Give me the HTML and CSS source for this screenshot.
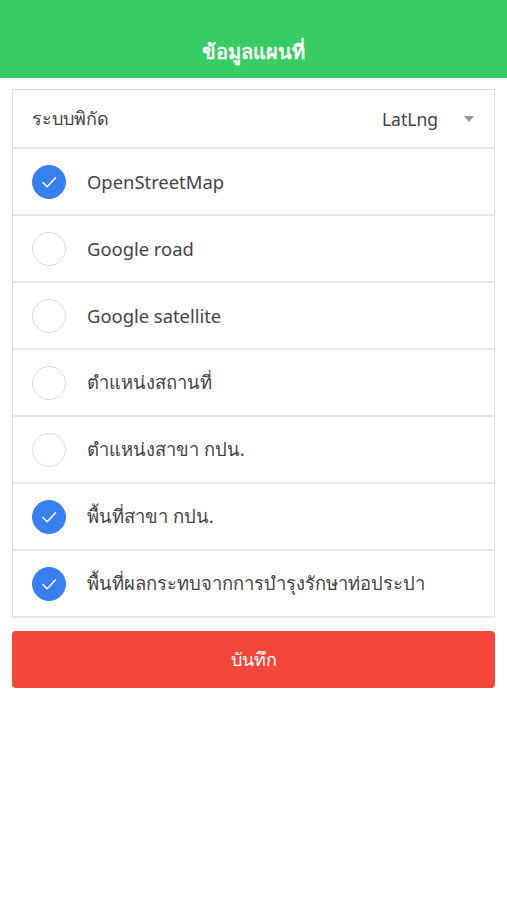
FILE: index.html
```html
<!DOCTYPE html>
<html>

<head>
    <title>ข้อมูลแผนที่</title>
    <meta charset="utf-8">
    <meta name="viewport" content="width=device-width, initial-scale=1">
    <link rel="stylesheet" href="styles.css">
</head>

<body>
    <div class="header">
        <div class="title">ข้อมูลแผนที่</div>
    </div>

    <div class="content">
        <div class="list">
            <div class="row select_row">
                <div class="label">ระบบพิกัด</div>
                <div class="value">LatLng</div>
                <div class="arrow"></div>
            </div>
            <div class="row">
                <div class="check checked"><svg viewBox="0 0 34 34"><path d="M10.5 17.5 L15 22 L24 12.5" /></svg></div>
                <div class="text">OpenStreetMap</div>
            </div>
            <div class="row">
                <div class="check"></div>
                <div class="text">Google road</div>
            </div>
            <div class="row">
                <div class="check"></div>
                <div class="text">Google satellite</div>
            </div>
            <div class="row">
                <div class="check"></div>
                <div class="text">ตำแหน่งสถานที่</div>
            </div>
            <div class="row">
                <div class="check"></div>
                <div class="text">ตำแหน่งสาขา กปน.</div>
            </div>
            <div class="row">
                <div class="check checked"><svg viewBox="0 0 34 34"><path d="M10.5 17.5 L15 22 L24 12.5" /></svg></div>
                <div class="text">พื้นที่สาขา กปน.</div>
            </div>
            <div class="row">
                <div class="check checked"><svg viewBox="0 0 34 34"><path d="M10.5 17.5 L15 22 L24 12.5" /></svg></div>
                <div class="text">พื้นที่ผลกระทบจากการบำรุงรักษาท่อประปา</div>
            </div>
        </div>

        <button class="save">บันทึก</button>
    </div>
</body>

</html>
```

FILE: styles.css
```css
body {
    margin: 0;
    font-family: "Noto Sans", "Liberation Sans", sans-serif;
    background-color: #FFFFFF;
    color: #444444;
}

.header {
    height: 78px;
    background-color: #37CD63;
    display: flex;
    align-items: flex-end;
    justify-content: center;
}

.title {
    color: #FFFFFF;
    font-size: 20px;
    font-weight: bold;
    line-height: 26px;
    margin-bottom: 13px;
}

.content {
    padding: 11px 12px 0 12px;
}

.list {
    border: 1px solid #DEDEDE;
    border-bottom: none;
}

.row {
    display: flex;
    align-items: center;
    height: 65px;
    border-bottom: 2px solid #E6E6E6;
    padding-left: 19px;
}

.select_row {
    height: 57px;
    padding-right: 20px;
}

.label {
    flex-grow: 1;
    font-size: 18px;
}

.value {
    font-size: 17.5px;
    margin-right: 26px;
}

.arrow {
    width: 0;
    height: 0;
    border-left: 5px solid transparent;
    border-right: 5px solid transparent;
    border-top: 6px solid #999999;
}

.check {
    width: 32px;
    height: 32px;
    border: 1px solid #DDDDDD;
    border-radius: 50%;
    margin-right: 21px;
    box-sizing: content-box;
}

.check.checked {
    background-color: #3880F0;
    border-color: #3880F0;
}

.check svg {
    display: block;
    width: 32px;
    height: 32px;
}

.check path {
    fill: none;
    stroke: #FFFFFF;
    stroke-width: 1.6;
    stroke-linecap: round;
    stroke-linejoin: round;
}

.text {
    font-size: 18.4px;
}

.save {
    display: block;
    width: 100%;
    height: 57px;
    margin-top: 13px;
    border: none;
    border-radius: 4px;
    background-color: #F2473A;
    color: #FFFFFF;
    font-family: inherit;
    font-size: 18px;
}
```
